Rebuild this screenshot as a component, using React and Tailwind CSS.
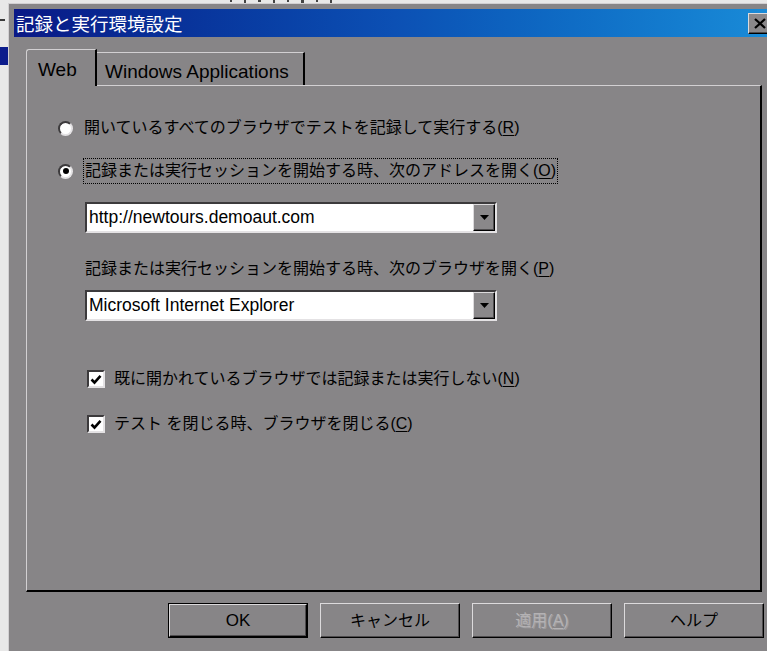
import React from 'react';

// raised 3D edge used by buttons and the tab strip
const raised =
  'border border-t-[#dcdadc] border-l-[#dcdadc] border-b-black border-r-black shadow-[inset_-1px_-1px_0_#4e4c4e]';
const sunken =
  'border-2 border-t-[#3c3a3c] border-l-[#3c3a3c] border-b-[#e4e2e4] border-r-[#e4e2e4]';

const Radio = ({ checked }) => (
  <div
    className={`w-[15px] h-[15px] rounded-full bg-white shrink-0 flex items-center justify-center ${sunken}`}
  >
    {checked && <div className="w-[6px] h-[6px] rounded-full bg-black" />}
  </div>
);

const Checkbox = () => (
  <div className={`w-[18px] h-[18px] bg-white shrink-0 flex items-center justify-center ${sunken}`}>
    <svg width="12" height="11" viewBox="0 0 12 11">
      <path d="M1.5 5.5 L4.5 8.5 L10.5 1.8" fill="none" stroke="black" strokeWidth="2.6" />
    </svg>
  </div>
);

const Combo = ({ value }) => (
  <div className={`w-[412px] h-[31px] flex bg-white ${sunken}`}>
    <div className="flex-1 flex items-center pl-[2px] text-[17.5px] text-black font-['Liberation_Sans',sans-serif]">
      {value}
    </div>
    <div className={`w-[22px] h-full bg-[#8a888a] flex items-center justify-center ${raised}`}>
      <svg width="9" height="5" viewBox="0 0 9 5">
        <polygon points="0,0 9,0 4.5,5" fill="black" />
      </svg>
    </div>
  </div>
);

const Accel = ({ k }) => (
  <>
    (<span className="underline underline-offset-2">{k}</span>)
  </>
);

const Button = ({ children, isDefault, disabled }) => (
  <div className={`w-[140px] h-[35px] ${isDefault ? 'border border-black' : ''}`}>
    <div
      className={`w-full h-full bg-[#878587] flex items-center justify-center text-[16px] ${raised} ${
        disabled ? 'text-[#b4b2b4] [text-shadow:1px_1px_0_#9e9c9e]' : 'text-black'
      }`}
    >
      {children}
    </div>
  </div>
);

export default function App() {
  return (
    <div className="w-[767px] h-[651px] overflow-hidden bg-[#e8e8e8] flex font-['Liberation_Sans','Noto_Sans_CJK_JP',sans-serif]">
      {/* window behind, left edge */}
      <div className="w-[8px] shrink-0 flex flex-col">
        <div className="h-[19px]" />
        <div className="h-[2px] w-[5px] bg-[#3a3a3a]" />
        <div className="h-[26px]" />
        <div className="h-[18px] bg-[#0c1c8c]" />
      </div>

      <div className="flex flex-col shrink-0">
        {/* window behind, top edge */}
        <div className="h-[3px] flex items-start pl-[222px] gap-[12px]">
          <div className="w-[2px] h-[2px] bg-[#444]" />
          <div className="w-[2px] h-[3px] bg-[#444]" />
          <div className="w-[3px] h-[2px] bg-[#444]" />
          <div className="w-[2px] h-[3px] bg-[#444]" />
          <div className="w-[2px] h-[2px] bg-[#444]" />
          <div className="w-[3px] h-[3px] bg-[#444]" />
          <div className="w-[2px] h-[2px] bg-[#444]" />
          <div className="w-[2px] h-[3px] bg-[#444]" />
        </div>

        {/* dialog */}
        <div className="w-[772px] h-[660px] bg-[#878587] border-t border-l border-[#d2d0d2] p-[5px] flex flex-col">
          {/* title bar */}
          <div className="h-[28px] shrink-0 flex items-center bg-linear-to-r from-[#0a1886] via-[#0c50b4] to-[#1a8cd8]">
            <span className="pl-[2px] text-white text-[18.5px] leading-none font-['Noto_Sans_CJK_JP',sans-serif]">
              記録と実行環境設定
            </span>
            <div className={`ml-auto mr-[3px] w-[24px] h-[21px] bg-[#8a888a] flex items-center justify-center ${raised}`}>
              <svg width="12" height="11" viewBox="0 0 12 11">
                <path d="M1 1 L11 10 M11 1 L1 10" stroke="black" strokeWidth="2.2" />
              </svg>
            </div>
          </div>

          {/* tabs */}
          <div className="mt-[12px] ml-[12px] h-[37px] flex items-end relative z-10 -mb-[1px] text-[19px] text-black">
            <div className="w-[71px] h-[37px] bg-[#878587] border-t border-l border-[#d2d0d2] rounded-tl-[3px] border-r-2 border-r-black flex items-center pl-[11px] pt-[4px]">
              Web
            </div>
            <div className="w-[208px] h-[33px] mb-[1px] border-t border-[#d2d0d2] border-r-2 border-r-black flex items-center pl-[8px] pt-[6px]">
              Windows Applications
            </div>
          </div>

          {/* tab page */}
          <div className="ml-[12px] w-[736px] h-[507px] shrink-0 border-t border-l border-[#d2d0d2] border-b-2 border-r-2 border-b-black border-r-black flex flex-col pl-[31px] text-[16px] text-black">
            <div className="mt-[30px] h-[24px] flex items-center">
              <Radio />
              <span className="ml-[11px]">
                開いているすべてのブラウザでテストを記録して実行する<Accel k="R" />
              </span>
            </div>
            <div className="mt-[18px] h-[26px] flex items-center">
              <Radio checked />
              <span className="ml-[10px] h-[26px] flex items-center px-[1px] border border-dotted border-black">
                記録または実行セッションを開始する時、次のアドレスを開く<Accel k="O" />
              </span>
            </div>

            <div className="ml-[27px] flex flex-col">
              <div className="mt-[18px]">
                <Combo value="http://newtours.demoaut.com" />
              </div>
              <div className="mt-[25px] h-[22px] flex items-center">
                記録または実行セッションを開始する時、次のブラウザを開く<Accel k="P" />
              </div>
              <div className="mt-[10px]">
                <Combo value="Microsoft Internet Explorer" />
              </div>

              <div className="mt-[46px] h-[24px] flex items-center pl-[2px]">
                <Checkbox />
                <span className="ml-[9px]">
                  既に開かれているブラウザでは記録または実行しない<Accel k="N" />
                </span>
              </div>
              <div className="mt-[21px] h-[24px] flex items-center pl-[2px]">
                <Checkbox />
                <span className="ml-[9px]">
                  テスト を閉じる時、ブラウザを閉じる<Accel k="C" />
                </span>
              </div>
            </div>
          </div>

          {/* dialog buttons */}
          <div className="mt-[11px] ml-[154px] flex gap-[12px]">
            <Button isDefault>
              <span className="text-[17px] font-['Liberation_Sans',sans-serif]">OK</span>
            </Button>
            <Button>キャンセル</Button>
            <Button disabled>
              適用(<span className="underline underline-offset-2">A</span>)
            </Button>
            <Button>ヘルプ</Button>
          </div>
        </div>
      </div>
    </div>
  );
}
